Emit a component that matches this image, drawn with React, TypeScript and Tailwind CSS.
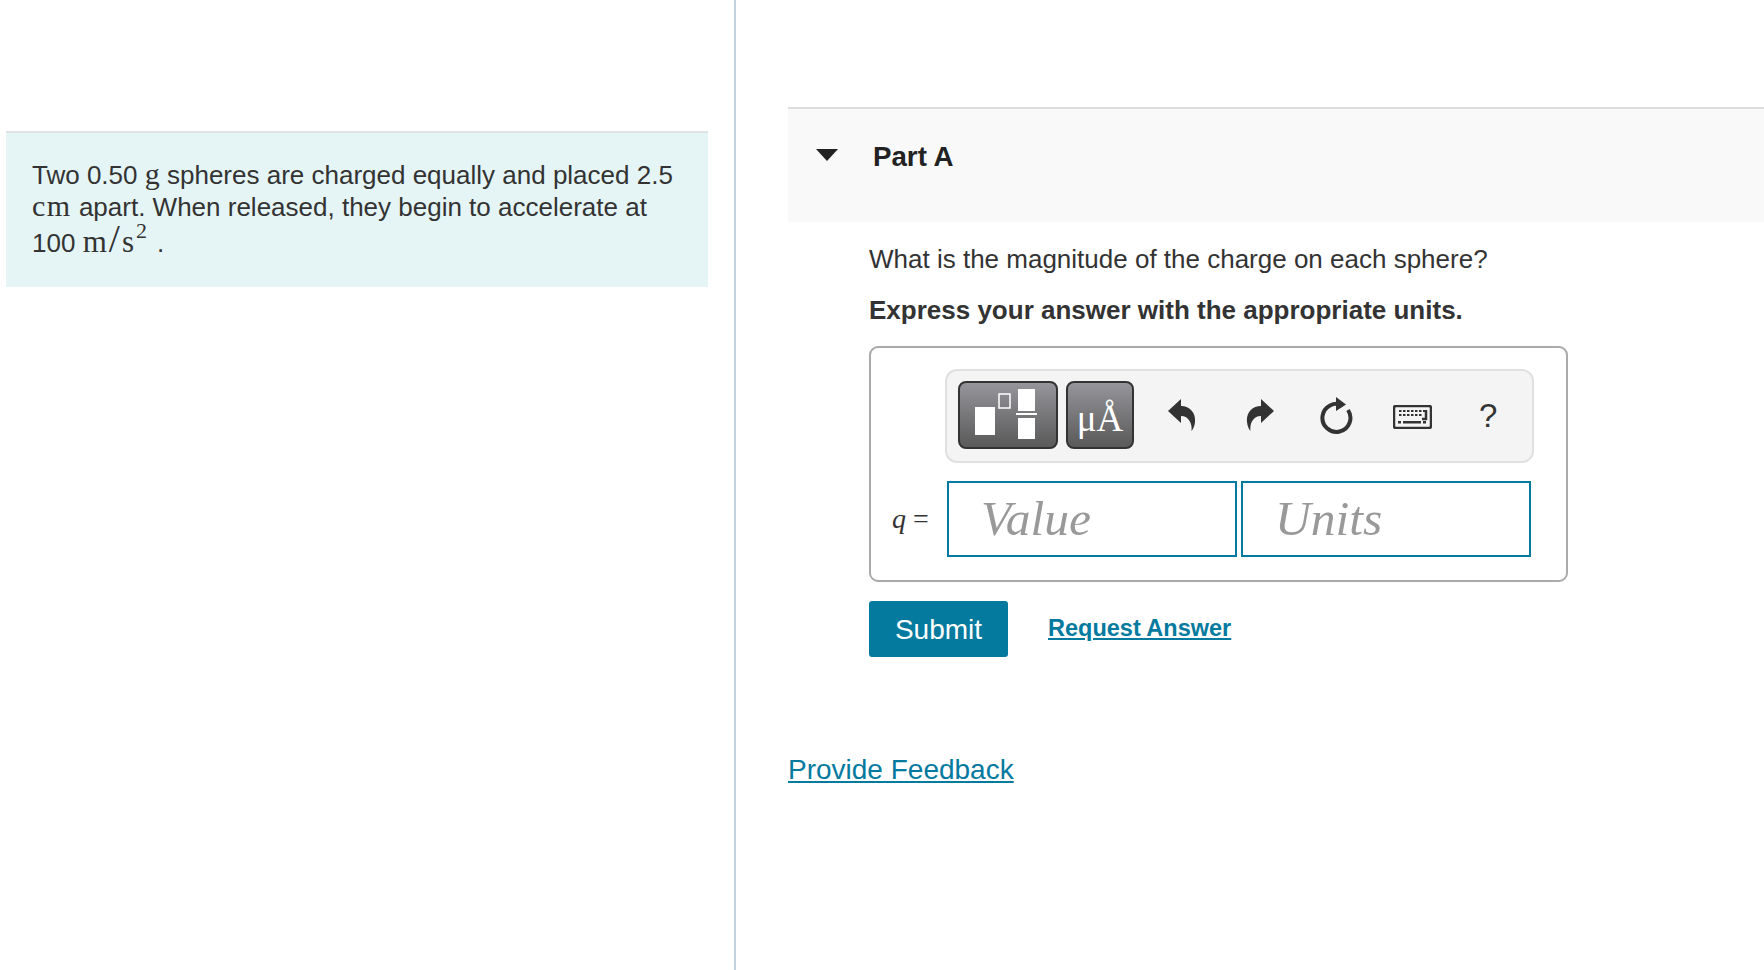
import { Fragment } from 'react'

const serif = "font-['Liberation_Serif',serif]"

function ArrowIcon({ flip }: { flip?: boolean }) {
  return (
    <svg width="28" height="32" viewBox="0 0 28 32" className={flip ? '-scale-x-100' : ''}>
      <path d="M0 12 L13 0 V7 C22 7 28 14 27 23 C26.6 27 25 30.5 23.5 32 C24.5 25 21 17 13 17 V24 Z" fill="#333" />
    </svg>
  )
}

function ResetIcon() {
  return (
    <svg width="34" height="38" viewBox="0 0 34 38" fill="none">
      <path d="M24 9.5 A14 14 0 1 0 29 14" stroke="#333" strokeWidth="4" />
      <path d="M17 1 L27 8.5 L17 15 Z" fill="#333" />
    </svg>
  )
}

function KeyboardIcon() {
  const rows = [
    [6, 10, 14, 18, 22, 26, 30],
    [6, 10, 14, 18, 22, 26],
  ]
  return (
    <svg width="39" height="24" viewBox="0 0 39 24" fill="none">
      <rect x="1" y="1" width="37" height="22" rx="2" stroke="#333" strokeWidth="2.5" />
      {rows.map((row, i) => (
        <Fragment key={i}>
          {row.map(x => (
            <rect key={x} x={x} y={5 + i * 4} width="2.5" height="2" fill="#333" />
          ))}
        </Fragment>
      ))}
      <path d="M33 5 V14 H29" stroke="#333" strokeWidth="2.5" />
      <rect x="5" y="16" width="3" height="2.5" fill="#333" />
      <rect x="10" y="16" width="18" height="2.5" fill="#333" />
      <rect x="30" y="16" width="3" height="2.5" fill="#333" />
    </svg>
  )
}

function TemplatesIcon() {
  return (
    <svg width="62" height="50" viewBox="0 0 62 50">
      <rect x="0" y="18" width="20" height="28" fill="#fff" />
      <rect x="24" y="5" width="11" height="14" fill="none" stroke="#fff" strokeWidth="1.5" />
      <rect x="43" y="0" width="17" height="22" fill="#fff" />
      <rect x="41" y="24" width="21" height="2" fill="#fff" />
      <rect x="43" y="29" width="17" height="21" fill="#fff" />
    </svg>
  )
}

export default function App() {
  return (
    <div className="flex h-[970px] overflow-hidden bg-white font-['Liberation_Sans',Arial,sans-serif] text-[#333]">
      <div className="w-[736px] shrink-0 border-r-2 border-[#c3d2df] pt-[131px] pl-[6px] pr-[26px]">
        <div className="h-[156px] border-t-2 border-[#dfe3e4] bg-[#e5f5f6] pl-[26px] pt-[26px] pr-[16px] text-[26px] leading-[32px]">
          <p>
            Two 0.50 <span className={`${serif} text-[30px] leading-none`}>g</span> spheres are charged equally and placed 2.5{' '}
            <span className={`${serif} text-[30px] leading-none tracking-[1.5px]`}>cm</span> apart. When released, they begin to accelerate at
          </p>
          <p className="-mt-[4px]">
            100{' '}
            <span className={`${serif} text-[31px] leading-none tracking-[2px]`}>
              m<span className="text-[40px] font-light leading-none">/</span>s<sup className="-top-[14px] text-[22px]">2</sup>
            </span>
            <span className="ml-[8px]">.</span>
          </p>
        </div>
      </div>

      <div className="flex-1 pl-[52px]">
        <div className="mt-[107px] flex h-[115px] border-t-2 border-[#dedede] bg-[#f9f9f9] pl-[28px] pt-[32px]">
          <div className="mt-[8px] h-0 w-0 border-x-[11px] border-t-[12px] border-x-transparent border-t-[#222]" />
          <h2 className="ml-[35px] text-[27.7px] leading-[32px] font-bold text-[#222]">Part A</h2>
        </div>

        <div className="pl-[81px]">
          <p className="mt-[21px] text-[26px] leading-[32px]">What is the magnitude of the charge on each sphere?</p>
          <p className="mt-[19px] text-[26px] leading-[32px] font-bold">Express your answer with the appropriate units.</p>

          <div className="mt-[20px] h-[236px] w-[699px] rounded-[9px] border-2 border-[#aaa] pt-[21px] pl-[74px]">
            <div className="flex h-[94px] w-[589px] items-center rounded-[12px] border-2 border-[#e0e0e0] bg-[#f4f4f4] pb-[2px] pl-[11px]">
              <button className="flex h-[68px] w-[100px] items-center justify-center rounded-[8px] border-2 border-[#333] bg-gradient-to-b from-[#96959b] to-[#5a5a5a] pr-[5px] pb-[2px]">
                <TemplatesIcon />
              </button>
              <button className={`ml-[8px] flex h-[68px] w-[68px] items-center justify-center rounded-[8px] border-2 border-[#333] bg-gradient-to-b from-[#96959b] to-[#5a5a5a] pt-[6px] text-[37px] leading-none text-white ${serif}`}>
                μÅ
              </button>
              <div className="ml-[34px] flex w-[28px] justify-center"><ArrowIcon /></div>
              <div className="ml-[50px] flex w-[28px] justify-center"><ArrowIcon flip /></div>
              <div className="ml-[45px] flex w-[34px] justify-center"><ResetIcon /></div>
              <div className="ml-[40px] mt-[4px]"><KeyboardIcon /></div>
              <div className="ml-[47px] text-[33px] leading-none">?</div>
            </div>

            <div className="mt-[18px] flex items-center">
              <span className={`-ml-[53px] w-[55px] text-[28px] ${serif}`}>
                <i>q</i> =
              </span>
              <input
                readOnly
                placeholder="Value"
                className={`h-[76px] w-[290px] border-2 border-[#057a9f] pb-[2px] pl-[32px] text-[49.5px] italic outline-none placeholder:text-[#999] ${serif}`}
              />
              <input
                readOnly
                placeholder="Units"
                className={`ml-[4px] h-[76px] w-[290px] border-2 border-[#057a9f] pb-[2px] pl-[32px] text-[49.5px] italic outline-none placeholder:text-[#999] ${serif}`}
              />
            </div>
          </div>

          <div className="mt-[19px] flex items-center">
            <button className="h-[56px] w-[139px] rounded-[3px] bg-[#057a9f] pt-[1px] text-[28px] text-white">Submit</button>
            <a href="#" className="ml-[40px] -mt-[1px] text-[23.5px] font-bold text-[#057a9f] underline">Request Answer</a>
          </div>
        </div>

        <a href="#" className="mt-[95px] inline-block text-[28px] leading-[36px] text-[#057a9f] underline">Provide Feedback</a>
      </div>
    </div>
  )
}
